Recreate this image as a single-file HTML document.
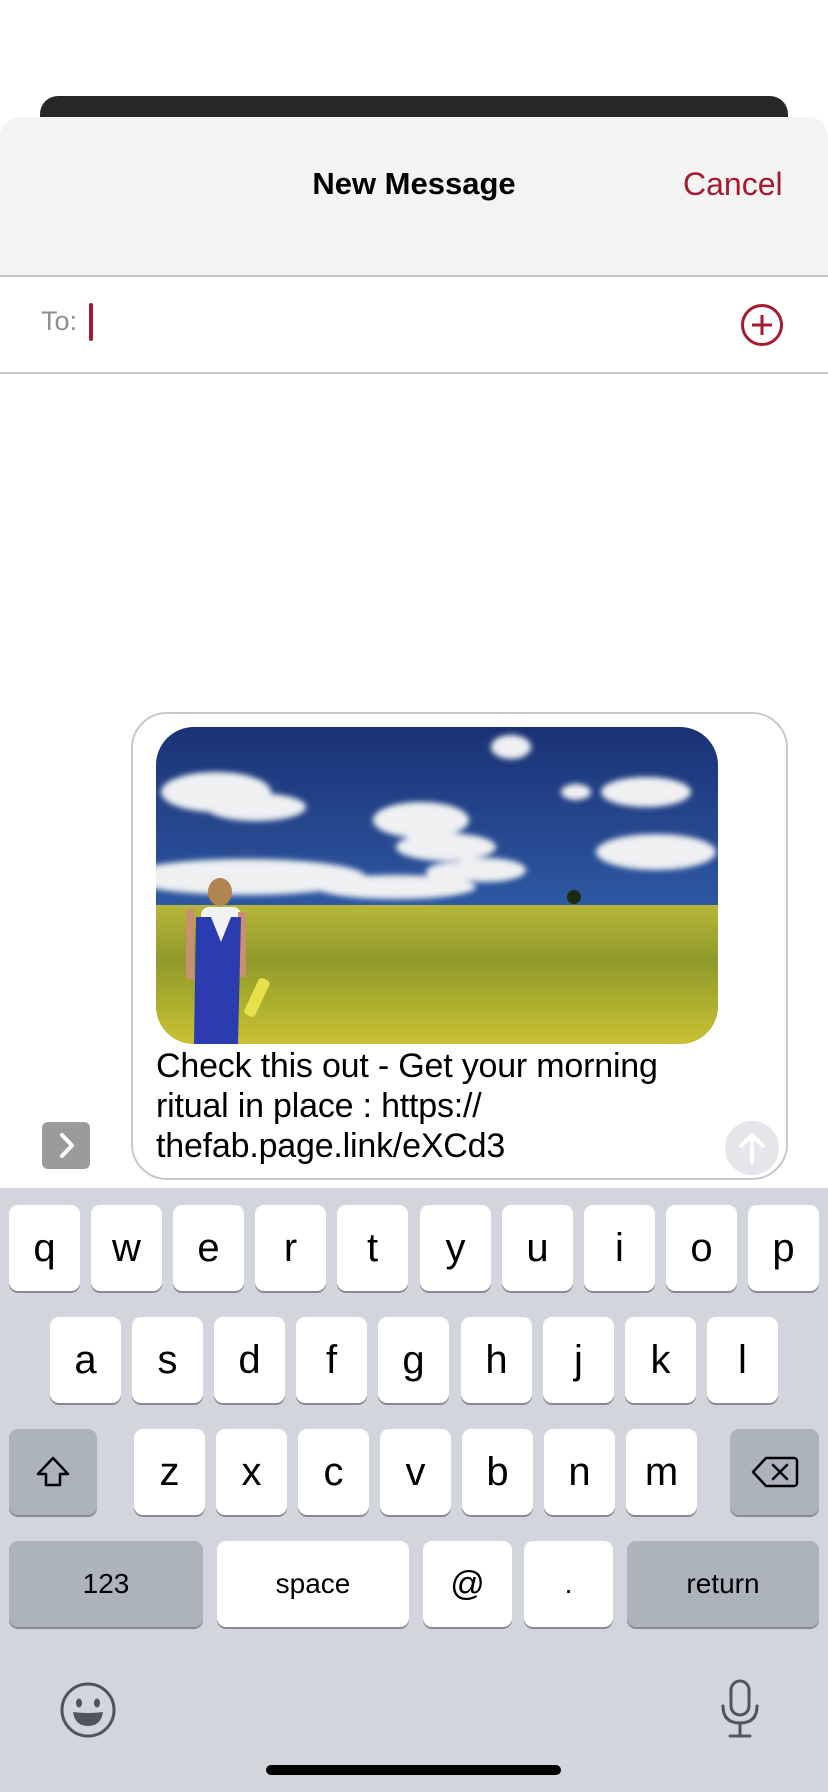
<!DOCTYPE html>
<html><head><meta charset="utf-8"><style>
*{margin:0;padding:0;box-sizing:border-box}
body{width:828px;height:1792px;background:#fff;position:relative;overflow:hidden;font-family:"Liberation Sans",sans-serif}
.abs{position:absolute}
.key{position:absolute;height:86px;background:#fff;border-radius:9px;box-shadow:0 2px 0 #898a8d;display:flex;align-items:center;justify-content:center;font-size:40px;color:#000}
.g{background:#adb3bc}
.sm{font-size:28px}
</style></head><body>
<div class="abs" style="left:40px;top:96px;width:748px;height:40px;background:#282828;border-radius:18px 18px 0 0"></div>
<div class="abs" style="left:0;top:117px;width:828px;height:160px;background:#f3f3f3;border-radius:20px 20px 0 0;border-bottom:2px solid #c4c4c4"></div>
<div class="abs" style="left:0;top:166px;width:828px;text-align:center;font-size:31px;font-weight:bold;color:#000">New Message</div>
<div class="abs" style="left:683px;top:166px;font-size:32px;color:#a51c30">Cancel</div>
<div class="abs" style="left:41px;top:306px;font-size:27px;color:#8e8e93">To:</div>
<div class="abs" style="left:89px;top:303px;width:4px;height:38px;background:#a51c30;border-radius:2px"></div>
<svg class="abs" style="left:740px;top:303px" width="44" height="44" viewBox="0 0 44 44"><circle cx="22" cy="22" r="19.5" fill="none" stroke="#a51c30" stroke-width="3"/><path d="M22 12v20M12 22h20" stroke="#a51c30" stroke-width="3"/></svg>
<div class="abs" style="left:0;top:372px;width:828px;height:2px;background:#c8c8c8"></div>

<div class="abs" style="left:131px;top:712px;width:657px;height:468px;border:2px solid #c8c8c8;border-radius:36px"></div>
<svg class="abs" style="left:156px;top:727px;border-radius:38px" width="562" height="317" viewBox="0 0 562 317">
<defs><linearGradient id="sky" x1="0" y1="0" x2="0" y2="1"><stop offset="0" stop-color="#1a3274"/><stop offset="0.6" stop-color="#2f5aa5"/><stop offset="1" stop-color="#7aa0d0"/></linearGradient>
<linearGradient id="fld" x1="0" y1="0" x2="0" y2="1"><stop offset="0" stop-color="#b7b53a"/><stop offset="0.4" stop-color="#8f9a2a"/><stop offset="1" stop-color="#c9c233"/></linearGradient>
<filter id="b"><feGaussianBlur stdDeviation="3"/></filter></defs>
<rect width="562" height="317" fill="url(#sky)"/>
<g fill="#eef0f2" filter="url(#b)">
<ellipse cx="60" cy="65" rx="55" ry="20"/><ellipse cx="100" cy="80" rx="50" ry="14"/>
<ellipse cx="265" cy="93" rx="48" ry="18"/><ellipse cx="290" cy="120" rx="50" ry="14"/>
<ellipse cx="355" cy="20" rx="20" ry="12"/><ellipse cx="490" cy="65" rx="45" ry="15"/>
<ellipse cx="500" cy="125" rx="60" ry="18"/><ellipse cx="330" cy="143" rx="40" ry="12"/>
<ellipse cx="90" cy="150" rx="120" ry="18"/><ellipse cx="240" cy="160" rx="80" ry="12"/>
<ellipse cx="420" cy="65" rx="15" ry="8"/><ellipse cx="300" cy="145" rx="30" ry="10"/>
</g>
<rect y="178" width="562" height="139" fill="url(#fld)"/>
<circle cx="418" cy="170" r="7" fill="#1b2a10"/>
<ellipse cx="64" cy="165" rx="12" ry="14" fill="#b08550"/>
<rect x="45" y="180" width="40" height="45" rx="8" fill="#f2f2f2"/>
<rect x="30" y="182" width="8" height="70" fill="#c89070"/><rect x="82" y="185" width="8" height="65" fill="#c89070"/>
<path d="M40 190 L55 190 L65 215 L75 190 L85 190 L82 317 L38 317 Z" fill="#2b3cb0"/>
<rect x="95" y="250" width="12" height="40" rx="4" fill="#e6e04a" transform="rotate(25 100 270)"/>
</svg>
<div class="abs" style="left:156px;top:1046px;font-size:34px;line-height:40px;color:#000;letter-spacing:-0.2px">Check this out - Get your morning<br>ritual in place : https://<br>thefab.page.link/eXCd3</div>
<div class="abs" style="left:42px;top:1122px;width:48px;height:47px;background:#9b9b9b;border-radius:6px"></div>
<svg class="abs" style="left:42px;top:1122px" width="48" height="47"><path d="M20 13l10 10.5-10 10.5" fill="none" stroke="#fff" stroke-width="4" stroke-linecap="round" stroke-linejoin="round"/></svg>
<svg class="abs" style="left:724px;top:1120px" width="56" height="56"><circle cx="28" cy="28" r="27" fill="#e5e5ea"/><path d="M28 42V15M17 26l11-11 11 11" fill="none" stroke="#fff" stroke-width="4" stroke-linecap="round" stroke-linejoin="round"/></svg>

<div class="abs" style="left:0;top:1188px;width:828px;height:604px;background:#d2d5db"></div>
<div class="key" style="left:9px;top:1205px;width:71px">q</div>
<div class="key" style="left:91px;top:1205px;width:71px">w</div>
<div class="key" style="left:173px;top:1205px;width:71px">e</div>
<div class="key" style="left:255px;top:1205px;width:71px">r</div>
<div class="key" style="left:337px;top:1205px;width:71px">t</div>
<div class="key" style="left:420px;top:1205px;width:71px">y</div>
<div class="key" style="left:502px;top:1205px;width:71px">u</div>
<div class="key" style="left:584px;top:1205px;width:71px">i</div>
<div class="key" style="left:666px;top:1205px;width:71px">o</div>
<div class="key" style="left:748px;top:1205px;width:71px">p</div>
<div class="key" style="left:50px;top:1317px;width:71px">a</div>
<div class="key" style="left:132px;top:1317px;width:71px">s</div>
<div class="key" style="left:214px;top:1317px;width:71px">d</div>
<div class="key" style="left:296px;top:1317px;width:71px">f</div>
<div class="key" style="left:378px;top:1317px;width:71px">g</div>
<div class="key" style="left:461px;top:1317px;width:71px">h</div>
<div class="key" style="left:543px;top:1317px;width:71px">j</div>
<div class="key" style="left:625px;top:1317px;width:71px">k</div>
<div class="key" style="left:707px;top:1317px;width:71px">l</div>
<div class="key g" style="left:9px;top:1429px;width:88px"><svg width="40" height="40" viewBox="0 0 40 40"><path d="M20 6L5 22h8v11h14V22h8Z" fill="none" stroke="#000" stroke-width="2.5" stroke-linejoin="round"/></svg></div>
<div class="key" style="left:134px;top:1429px;width:71px">z</div>
<div class="key" style="left:216px;top:1429px;width:71px">x</div>
<div class="key" style="left:298px;top:1429px;width:71px">c</div>
<div class="key" style="left:380px;top:1429px;width:71px">v</div>
<div class="key" style="left:462px;top:1429px;width:71px">b</div>
<div class="key" style="left:544px;top:1429px;width:71px">n</div>
<div class="key" style="left:626px;top:1429px;width:71px">m</div>
<div class="key g" style="left:730px;top:1429px;width:89px"><svg width="48" height="34" viewBox="0 0 48 34"><path d="M15 3H43a3 3 0 0 1 3 3V28a3 3 0 0 1-3 3H15L2 17Z" fill="none" stroke="#000" stroke-width="2.5" stroke-linejoin="round"/><path d="M22 10l14 14M36 10L22 24" stroke="#000" stroke-width="2.5" stroke-linecap="round"/></svg></div>
<div class="key g sm" style="left:9px;top:1541px;width:194px">123</div>
<div class="key sm" style="left:217px;top:1541px;width:192px">space</div>
<div class="key sm" style="left:423px;top:1541px;width:89px;font-size:34px">@</div>
<div class="key sm" style="left:524px;top:1541px;width:89px">.</div>
<div class="key g sm" style="left:627px;top:1541px;width:192px">return</div>
<svg class="abs" style="left:58px;top:1680px" width="60" height="60" viewBox="0 0 60 60"><circle cx="30" cy="30" r="26" fill="none" stroke="#50555c" stroke-width="3"/><ellipse cx="21" cy="23" rx="3" ry="4.5" fill="#50555c"/><ellipse cx="39" cy="23" rx="3" ry="4.5" fill="#50555c"/><path d="M15 32q15 2 30 0q-2 14-15 14t-15-14Z" fill="#50555c"/></svg>
<svg class="abs" style="left:718px;top:1678px" width="44" height="64" viewBox="0 0 44 64"><rect x="13" y="3" width="18" height="34" rx="9" fill="none" stroke="#50555c" stroke-width="3"/><path d="M5 28q0 17 17 17t17-17M22 45v12M12 58h20" fill="none" stroke="#50555c" stroke-width="3" stroke-linecap="round"/></svg>
<div class="abs" style="left:266px;top:1765px;width:295px;height:10px;border-radius:5px;background:#000"></div>
</body></html>
